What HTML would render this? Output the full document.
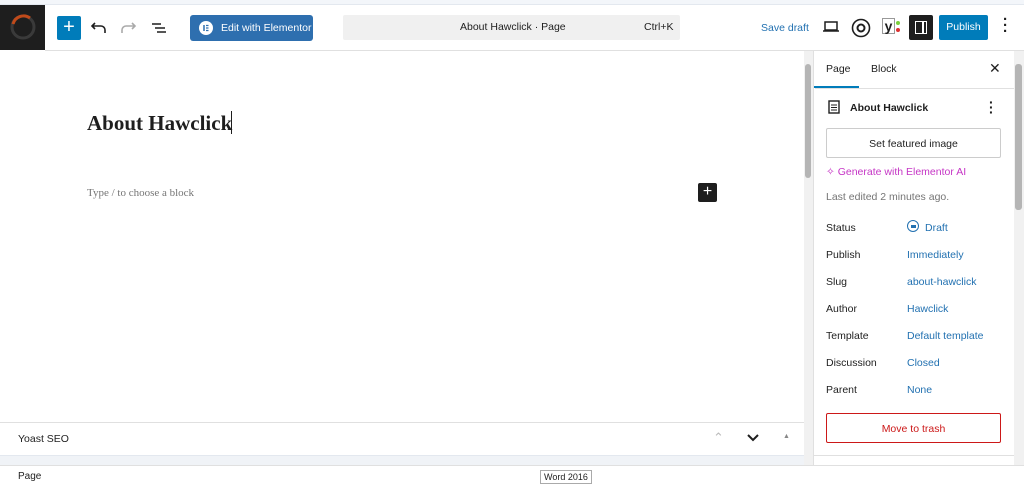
<!DOCTYPE html>
<html><head><meta charset="utf-8"><style>
*{box-sizing:border-box;margin:0;padding:0}
body{width:1024px;height:484px;overflow:hidden;background:#fff;font-family:"Liberation Sans",sans-serif;font-size:10.5px;color:#1e1e1e;position:relative}
.a{position:absolute;white-space:nowrap}
.lnk{color:#2271b1}
</style></head><body>
<div class="a" style="left:0;top:0;width:1024px;height:5px;background:#f3f6fa;border-bottom:1px solid #e3e8ef"></div>
<div class="a" style="left:0;top:5px;width:45px;height:45px;background:#1e1e1e"></div>
<svg class="a" style="left:8px;top:12px" width="30" height="30"><circle cx="15" cy="15" r="11" fill="none" stroke="#3a3a3a" stroke-width="3"/><path d="M5 12 A11 11 0 0 1 22 6" fill="none" stroke="#c04a1a" stroke-width="3"/></svg>
<div class="a" style="left:45px;top:50px;width:979px;height:1px;background:#e0e0e0"></div>
<div class="a" style="left:57px;top:16px;width:24px;height:24px;background:#007cba;border-radius:2px;color:#fff;font-size:20px;line-height:22px;text-align:center">+</div>
<svg class="a" style="left:90px;top:20px" width="18" height="16"><path d="M5 3 L2 6 L5 9 M2 6 H11 a4 4 0 0 1 4 4 v3" fill="none" stroke="#1e1e1e" stroke-width="1.6"/></svg>
<svg class="a" style="left:119px;top:20px" width="18" height="16"><path d="M13 3 L16 6 L13 9 M16 6 H7 a4 4 0 0 0 -4 4 v3" fill="none" stroke="#aaa" stroke-width="1.6"/></svg>
<svg class="a" style="left:150px;top:20px" width="18" height="16"><path d="M2 4H11M5 8H15M7 12H16" stroke="#1e1e1e" stroke-width="1.6"/></svg>
<div class="a" style="left:190px;top:15px;width:123px;height:26px;background:#2e6faf;border-radius:3px;color:#fff;font-size:10.5px;line-height:26px;padding-left:31px">Edit with Elementor</div>
<svg class="a" style="left:199px;top:21px" width="14" height="14"><circle cx="7" cy="7" r="7" fill="#fff"/><path d="M5 4v6" stroke="#2e6faf" stroke-width="1.5"/><path d="M7 4.5h2.5M7 7h2.5M7 9.5h2.5" stroke="#2e6faf" stroke-width="1.2"/></svg>
<div class="a" style="left:343px;top:15px;width:337px;height:25px;background:#f0f0f0;border-radius:2px"></div>
<div class="a" style="left:460px;top:21px">About Hawclick · Page</div>
<div class="a" style="left:644px;top:21px">Ctrl+K</div>
<div class="a lnk" style="left:761px;top:22px">Save draft</div>
<svg class="a" style="left:822px;top:19px" width="18" height="16"><rect x="3" y="3" width="12" height="8" fill="none" stroke="#1e1e1e" stroke-width="1.5"/><path d="M1 12H17" stroke="#1e1e1e" stroke-width="1.5"/></svg>
<svg class="a" style="left:851px;top:18px" width="20" height="20"><circle cx="10" cy="10" r="8.5" fill="none" stroke="#1e1e1e" stroke-width="1.6"/><circle cx="10" cy="10" r="3.5" fill="none" stroke="#1e1e1e" stroke-width="2"/></svg>
<div class="a" style="left:882px;top:18px;font-size:14px;font-weight:bold;border:1px solid #999;width:13px;height:16px;line-height:14px;text-align:center">y</div>
<div class="a" style="left:896px;top:21px;width:4px;height:4px;border-radius:50%;background:#7ad03a"></div>
<div class="a" style="left:896px;top:28px;width:4px;height:4px;border-radius:50%;background:#dc3232"></div>
<div class="a" style="left:909px;top:15px;width:24px;height:25px;background:#1e1e1e;border-radius:2px"></div>
<div class="a" style="left:915px;top:21px;width:12px;height:13px;border:1.5px solid #fff"></div>
<div class="a" style="left:922px;top:21px;width:1.5px;height:13px;background:#fff"></div>
<div class="a" style="left:939px;top:15px;width:49px;height:25px;background:#007cba;border-radius:2px;color:#fff;line-height:25px;text-align:center">Publish</div>
<div class="a" style="left:1003px;top:17px;font-size:15px;font-weight:bold;line-height:6px;width:4px;white-space:normal">·<br>·<br>·</div>
<div class="a" style="left:87px;top:111px;font-family:'Liberation Serif',serif;font-size:21px;font-weight:bold">About Hawclick</div>
<div class="a" style="left:231px;top:111px;width:1px;height:23px;background:#1e1e1e"></div>
<div class="a" style="left:87px;top:187px;font-family:'Liberation Serif',serif;font-size:11px;color:#757575">Type / to choose a block</div>
<div class="a" style="left:698px;top:183px;width:19px;height:19px;background:#1e1e1e;border-radius:2px;color:#fff;font-size:16px;line-height:18px;text-align:center">+</div>
<div class="a" style="left:804px;top:51px;width:10px;height:414px;background:#f1f1f1"></div>
<div class="a" style="left:805px;top:64px;width:6px;height:114px;background:#b5b5b5;border-radius:3px"></div>
<div class="a" style="left:813px;top:51px;width:1px;height:414px;background:#e0e0e0"></div>
<div class="a" style="left:0;top:422px;width:804px;height:1px;background:#e0e0e0"></div>
<div class="a" style="left:18px;top:433px">Yoast SEO</div>
<div class="a" style="left:713px;top:430px;color:#bbb;font-size:13px">⌃</div>
<svg class="a" style="left:746px;top:433px" width="14" height="10"><path d="M2 2L7 7L12 2" fill="none" stroke="#1e1e1e" stroke-width="2"/></svg>
<div class="a" style="left:783px;top:433px;font-size:7px;color:#888">▲</div>
<div class="a" style="left:0;top:455px;width:804px;height:10px;background:#f0f3f7;border-top:1px solid #e3e8ef"></div>
<div class="a" style="left:0;top:465px;width:1024px;height:1px;background:#e0e0e0"></div>
<div class="a" style="left:18px;top:471px;font-size:10px">Page</div>
<div class="a" style="left:540px;top:470px;border:1px solid #aaa;font-size:9px;padding:1px 3px;background:#fff">Word 2016</div>
<div class="a" style="left:815px;top:88px;width:199px;height:1px;background:#e0e0e0"></div>
<div class="a" style="left:826px;top:63px">Page</div>
<div class="a" style="left:814px;top:86px;width:45px;height:2px;background:#007cba"></div>
<div class="a" style="left:871px;top:63px">Block</div>
<div class="a" style="left:989px;top:60px;font-size:14px">✕</div>
<svg class="a" style="left:827px;top:99px" width="14" height="16"><rect x="2" y="2" width="10" height="12" fill="none" stroke="#1e1e1e" stroke-width="1.4"/><path d="M4 6H10M4 8.5H10M4 11H10" stroke="#1e1e1e"/></svg>
<div class="a" style="left:850px;top:102px;font-weight:bold">About Hawclick</div>
<div class="a" style="left:989px;top:100px;font-size:14px;font-weight:bold;line-height:5px;white-space:normal;width:4px">·<br>·<br>·</div>
<div class="a" style="left:826px;top:128px;width:175px;height:30px;border:1px solid #ccc;border-radius:2px;text-align:center;line-height:30px">Set featured image</div>
<div class="a" style="left:826px;top:166px;color:#c535c5">✧ Generate with Elementor AI</div>
<div class="a" style="left:826px;top:191px;color:#757575">Last edited 2 minutes ago.</div>
<div class="a" style="left:826px;top:222px">Status</div>
<div class="a" style="left:907px;top:220px;width:12px;height:12px;border:1.5px solid #2271b1;border-radius:50%"></div>
<div class="a" style="left:911px;top:225px;width:5px;height:3px;background:#2271b1"></div>
<div class="a lnk" style="left:925px;top:222px">Draft</div>
<div class="a" style="left:826px;top:249px">Publish</div><div class="a lnk" style="left:907px;top:249px">Immediately</div>
<div class="a" style="left:826px;top:276px">Slug</div><div class="a lnk" style="left:907px;top:276px">about-hawclick</div>
<div class="a" style="left:826px;top:303px">Author</div><div class="a lnk" style="left:907px;top:303px">Hawclick</div>
<div class="a" style="left:826px;top:330px">Template</div><div class="a lnk" style="left:907px;top:330px">Default template</div>
<div class="a" style="left:826px;top:357px">Discussion</div><div class="a lnk" style="left:907px;top:357px">Closed</div>
<div class="a" style="left:826px;top:384px">Parent</div><div class="a lnk" style="left:907px;top:384px">None</div>
<div class="a" style="left:826px;top:413px;width:175px;height:30px;border:1px solid #cc1818;border-radius:2px;text-align:center;line-height:30px;color:#cc1818">Move to trash</div>
<div class="a" style="left:814px;top:455px;width:200px;height:1px;background:#e0e0e0"></div>
<div class="a" style="left:1014px;top:51px;width:10px;height:414px;background:#f1f1f1"></div>
<div class="a" style="left:1015px;top:64px;width:7px;height:146px;background:#b5b5b5;border-radius:3px"></div>
</body></html>
